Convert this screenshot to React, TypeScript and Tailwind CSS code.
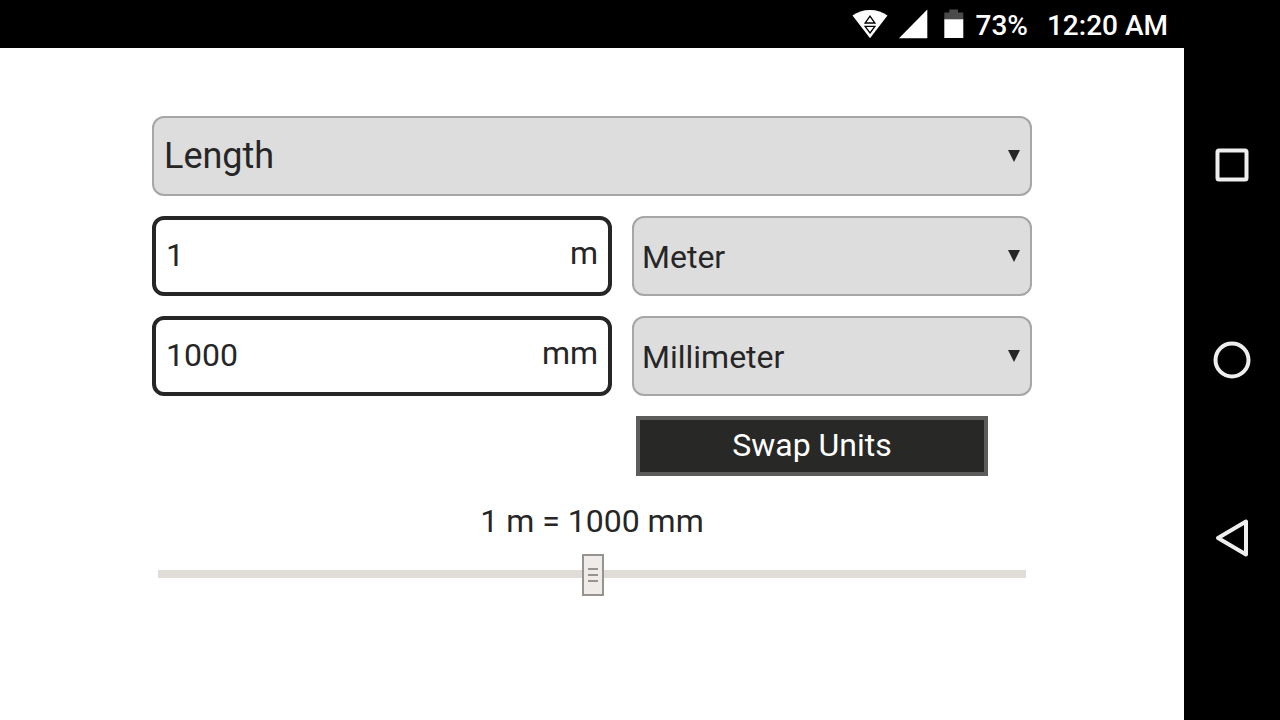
import { useState } from "react";
import type { ReactNode } from "react";

const units = [
  { name: "Millimeter", symbol: "mm", meters: 0.001 },
  { name: "Centimeter", symbol: "cm", meters: 0.01 },
  { name: "Meter", symbol: "m", meters: 1 },
  { name: "Kilometer", symbol: "km", meters: 1000 },
];

const findUnit = (name: string) => units.find((u) => u.name === name) ?? units[2];

function WifiIcon() {
  return (
    <svg width="36" height="30" viewBox="0 0 36 30" aria-hidden="true">
      <path d="M0.5 6.6C5.3 2.9 11.2 1 18 1s12.700 1.900 17.500 5.600L18 29.200z" fill="#fff" />
      <path d="M18 7.200l4.900 6.800H13.100zM18 24l4.900-6.600H13.100z" fill="none" stroke="#000" strokeWidth="1.300" />
    </svg>
  );
}

function SignalIcon() {
  return (
    <svg width="29" height="30" viewBox="0 0 29 30" aria-hidden="true">
      <path d="M28.300 0.500v28.800H0z" fill="#fff" />
    </svg>
  );
}

function BatteryIcon() {
  return (
    <svg width="20" height="30" viewBox="0 0 20 30" aria-hidden="true">
      <path d="M5.300 0.500h8.700v3h5.300V11H0.300V3.500h5z" fill="#4a4a4a" />
      <path d="M0.300 10.300h19V29h-19z" fill="#fff" />
    </svg>
  );
}

function StatusBar() {
  return (
    <header className="flex h-12 items-center justify-end bg-black pr-4 text-white">
      <WifiIcon />
      <div className="ml-[11px] flex">
        <SignalIcon />
      </div>
      <div className="ml-4 flex">
        <BatteryIcon />
      </div>
      <span className="ml-[11px] pt-1 text-[28px] leading-8 font-medium">73%</span>
      <time className="ml-[19px] pt-1 text-[28px] leading-8 font-medium">12:20 AM</time>
    </header>
  );
}

function NavBar() {
  const item = "flex w-full items-center justify-center";
  return (
    <nav
      aria-label="System"
      className="grid w-24 shrink-0 grid-rows-[194fr_196fr_160fr] bg-black pt-[68px] pb-[102px]"
    >
      <button type="button" aria-label="Recent apps" className={item}>
        <svg width="40" height="40" viewBox="0 0 40 40">
          <rect x="5.500" y="5.500" width="29" height="29" rx="1.500" fill="none" stroke="#eee" strokeWidth="4" />
        </svg>
      </button>
      <button type="button" aria-label="Home" className={item}>
        <svg width="40" height="40" viewBox="0 0 40 40">
          <circle cx="20" cy="20" r="16.500" fill="none" stroke="#eee" strokeWidth="4" />
        </svg>
      </button>
      <button type="button" aria-label="Back" className={item}>
        <svg width="40" height="40" viewBox="0 0 40 40">
          <path d="M34 3.500v33L6 20z" fill="none" stroke="#eee" strokeWidth="4" strokeLinejoin="round" />
        </svg>
      </button>
    </nav>
  );
}

function Dropdown(props: {
  label: string;
  value: string;
  options: string[];
  onChange: (value: string) => void;
  textClass: string;
}) {
  return (
    <div className="relative min-w-0">
      <select
        aria-label={props.label}
        value={props.value}
        onChange={(e) => props.onChange(e.target.value)}
        className={`block h-20 w-full appearance-none rounded-xl border-2 border-[#a6a6a6] bg-[#dddddd] pr-10 ${props.textClass}`}
      >
        {props.options.map((o) => (
          <option key={o}>{o}</option>
        ))}
      </select>
      <div className="pointer-events-none absolute inset-y-0 right-3 flex items-center">
        <svg width="12" height="12" viewBox="0 0 12 12" aria-hidden="true">
          <path d="M0 0h12L6 12z" fill="#262626" />
        </svg>
      </div>
    </div>
  );
}

function ValueBox(props: { label: string; value: string; symbol: string; onChange?: (value: string) => void }) {
  return (
    <label className="flex h-20 min-w-0 items-center rounded-xl border-4 border-[#262626] px-2.5 pb-0.5">
      <input
        aria-label={props.label}
        value={props.value}
        readOnly={!props.onChange}
        onChange={(e) => props.onChange?.(e.target.value)}
        className="h-full min-w-0 flex-1 bg-transparent outline-none"
      />
      <span className="pb-1">{props.symbol}</span>
    </label>
  );
}

function Row({ children }: { children: ReactNode }) {
  return <div className="grid grid-cols-[23fr_20fr] gap-5">{children}</div>;
}

export default function App() {
  const [category, setCategory] = useState("Length");
  const [from, setFrom] = useState("Meter");
  const [to, setTo] = useState("Millimeter");
  const [amount, setAmount] = useState("1");
  const [position, setPosition] = useState(501);

  const source = findUnit(from);
  const target = findUnit(to);
  const result = String(Number(((Number(amount) * source.meters) / target.meters).toPrecision(10)));
  const names = units.map((u) => u.name);

  return (
    <div className="flex min-h-screen bg-white font-['Roboto',sans-serif] text-[32px] leading-10 text-[#262626]">
      <div className="flex min-w-0 flex-1 flex-col">
        <StatusBar />
        <main className="mx-auto flex w-full max-w-[880px] flex-col gap-5 pt-[68px]">
          <Dropdown
            label="Category"
            value={category}
            options={["Length"]}
            onChange={setCategory}
            textClass="pl-2.5 text-[36px]"
          />
          <Row>
            <ValueBox label="From value" value={amount} symbol={source.symbol} onChange={setAmount} />
            <Dropdown label="From unit" value={from} options={names} onChange={setFrom} textClass="pl-2 pt-0.5" />
          </Row>
          <Row>
            <ValueBox label="To value" value={result} symbol={target.symbol} />
            <Dropdown label="To unit" value={to} options={names} onChange={setTo} textClass="pl-2 pt-0.5" />
          </Row>
          <div className="flex justify-end pr-11">
            <button
              type="button"
              onClick={() => {
                setFrom(to);
                setTo(from);
              }}
              className="h-[60px] w-2/5 min-w-[352px] border-4 border-[#5c5c5a] bg-[#282826] pb-0.5 text-white"
            >
              Swap Units
            </button>
          </div>
          <div className="flex flex-col gap-3 px-1.5 pt-[5px]">
            <output className="text-center">
              {amount} {source.symbol} = {result} {target.symbol}
            </output>
            <input
              type="range"
              aria-label="Value"
              min={0}
              max={1000}
              value={position}
              onChange={(e) => {
                const next = Number(e.target.value);
                setPosition(next);
                setAmount(String(Math.max(1, next - 500)));
              }}
              className="block h-[42px] w-full appearance-none bg-transparent [&::-webkit-slider-runnable-track]:h-2 [&::-webkit-slider-runnable-track]:bg-[#e0ddd9] [&::-webkit-slider-thumb]:-mt-4 [&::-webkit-slider-thumb]:h-[42px] [&::-webkit-slider-thumb]:w-[22px] [&::-webkit-slider-thumb]:appearance-none [&::-webkit-slider-thumb]:border-2 [&::-webkit-slider-thumb]:border-[#979390] [&::-webkit-slider-thumb]:bg-[#efebe8] [&::-webkit-slider-thumb]:bg-[linear-gradient(#979390_2px,transparent_2px_6px,#979390_6px_8px,transparent_8px_12px,#979390_12px)] [&::-webkit-slider-thumb]:bg-[length:10px_14px] [&::-webkit-slider-thumb]:bg-center [&::-webkit-slider-thumb]:bg-no-repeat"
            />
          </div>
        </main>
      </div>
      <NavBar />
    </div>
  );
}
